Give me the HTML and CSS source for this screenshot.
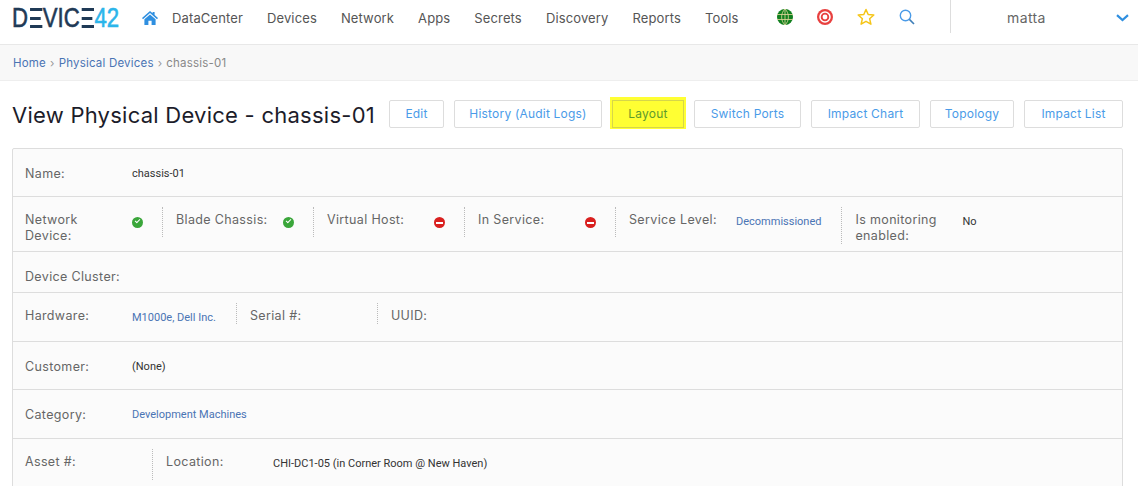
FILE: index.html
```html
<!DOCTYPE html>
<html>
<head>
    <title>View Physical Device - chassis-01</title>
    <link rel="stylesheet" href="styles.css">
</head>
<body>
    <header class="topbar">
        <a class="logo"><span class="logo-dark">D<span class="logo-e">E</span>VIC<span class="logo-e">E</span></span><span class="logo-light">42</span></a>
        <svg class="home-icon" viewBox="0 0 16 14" width="16" height="14">
            <path fill="#2f8fe0" d="M8 0 L10.6 2.3 V1 H12.6 V4.1 L16 7.1 L15 8.2 L8 2.1 L1 8.2 L0 7.1 Z"/>
            <path fill="#2f8fe0" d="M8 3.4 L13.6 8.2 V14 H9.6 V9.8 H6.4 V14 H2.4 V8.2 Z"/>
        </svg>
        <nav class="nav">
            <a>DataCenter</a>
            <a>Devices</a>
            <a>Network</a>
            <a>Apps</a>
            <a>Secrets</a>
            <a>Discovery</a>
            <a>Reports</a>
            <a>Tools</a>
        </nav>
        <div class="tools">
            <svg viewBox="0 0 16 16" width="16" height="16">
                <circle cx="8" cy="8" r="8" fill="#12801f"/>
                <path fill="none" stroke="#e8d9a0" stroke-width=".8" d="M0 5.5 H16 M0 10.5 H16 M8 0 V16 M8 0 C3.5 4 3.5 12 8 16 M8 0 C12.5 4 12.5 12 8 16"/>
            </svg>
            <svg viewBox="0 0 16 16" width="16" height="16">
                <circle cx="8" cy="8" r="8" fill="#e8403f"/>
                <circle cx="8" cy="8" r="5" fill="#e8403f" stroke="#fff" stroke-width="1.5"/>
                <circle cx="8" cy="8" r="2.4" fill="#fff"/>
            </svg>
            <svg viewBox="0 0 18 18" width="18" height="18">
                <path fill="#fff" stroke="#f5c518" stroke-width="1.5" stroke-linejoin="round" d="M9 1.5 L11.2 6.5 L16.8 7 L12.6 10.7 L13.9 16.2 L9 13.3 L4.1 16.2 L5.4 10.7 L1.2 7 L6.8 6.5 Z"/>
            </svg>
            <svg viewBox="0 0 16 16" width="16" height="16">
                <circle cx="6.5" cy="6.5" r="5.2" fill="none" stroke="#4a9be8" stroke-width="1.4"/>
                <path stroke="#3f7fb8" stroke-width="1.6" d="M10.4 10.4 L15 15"/>
            </svg>
        </div>
        <div class="user">
            <span class="user-name">matta</span>
            <svg viewBox="0 0 13 8" width="13" height="8">
                <path fill="none" stroke="#2f8fe0" stroke-width="2.2" d="M1 1.2 L6.5 6 L12 1.2"/>
            </svg>
        </div>
    </header>

    <div class="breadcrumb">
        <a>Home</a><span class="sep">›</span><a>Physical Devices</a><span class="sep">›</span><span class="current">chassis-01</span>
    </div>

    <main class="content">
        <div class="title-row">
            <h1>View Physical Device - chassis-01</h1>
            <div class="actions">
                <a class="btn">Edit</a>
                <a class="btn">History (Audit Logs)</a>
                <a class="btn btn-marked">Layout</a>
                <a class="btn">Switch Ports</a>
                <a class="btn">Impact Chart</a>
                <a class="btn">Topology</a>
                <a class="btn">Impact List</a>
            </div>
        </div>

        <div class="card">
            <div class="row row-plain row-name">
                <div class="field"><span class="label">Name:</span><span class="value">chassis-01</span></div>
            </div>
            <div class="row row-flags">
                <div class="field"><span class="label">Network Device:</span><span class="value split tight"><i class="dot ok"></i></span></div>
                <div class="field"><span class="label">Blade Chassis:</span><span class="value split tight"><i class="dot ok"></i></span></div>
                <div class="field"><span class="label">Virtual Host:</span><span class="value split tight"><i class="dot no"></i></span></div>
                <div class="field"><span class="label">In Service:</span><span class="value split tight"><i class="dot no"></i></span></div>
                <div class="field"><span class="label">Service Level:</span><span class="value split split-tall"><a>Decommissioned</a></span></div>
                <div class="field"><span class="label">Is monitoring enabled:</span><span class="value">No</span></div>
            </div>
            <div class="row row-plain row-cluster">
                <div class="field"><span class="label">Device Cluster:</span></div>
            </div>
            <div class="row row-hardware">
                <div class="field"><span class="label">Hardware:</span><span class="value split"><a>M1000e, Dell Inc.</a></span></div>
                <div class="field"><span class="label">Serial #:</span><span class="value split"></span></div>
                <div class="field"><span class="label">UUID:</span></div>
            </div>
            <div class="row row-plain row-name">
                <div class="field"><span class="label">Customer:</span><span class="value">(None)</span></div>
            </div>
            <div class="row row-plain row-category">
                <div class="field"><span class="label">Category:</span><span class="value"><a>Development Machines</a></span></div>
            </div>
            <div class="row row-asset">
                <div class="field"><span class="label">Asset #:</span><span class="value split"></span></div>
                <div class="field"><span class="label">Location:</span><span class="value">CHI-DC1-05 (in Corner Room @ New Haven)</span></div>
            </div>
        </div>
    </main>
</body>
</html>
```

FILE: styles.css
```css
html, body {
    height: 100%;
    overflow: hidden;
}

body {
    margin: 0;
    background-color: #fff;
    font-family: Inter, "Open Sans", sans-serif;
    color: #666;
}

.topbar {
    display: flex;
    align-items: flex-start;
    height: 44px;
    border-bottom: 1px solid #e8e8e8;
}

.logo {
    width: 130px;
    margin-left: 12px;
    font-family: "Liberation Sans", sans-serif;
    font-size: 27px;
    line-height: 37px;
    white-space: nowrap;
    -webkit-text-stroke: 0.6px;
    transform: scaleX(0.82);
    transform-origin: left center;
}

.logo-dark {
    color: #1f3a56;
}

.logo-light {
    color: #2cb5ea;
}

/* the E of the logo has no stem, just three bars */
.logo-e {
    display: inline-block;
    height: 37px;
    color: transparent;
    -webkit-text-stroke: 0;
    background-image: linear-gradient(#1f3a56, #1f3a56), linear-gradient(#1f3a56, #1f3a56), linear-gradient(#1f3a56, #1f3a56);
    background-repeat: no-repeat;
    background-size: 15px 3px, 13px 3px, 15px 3px;
    background-position: 2px 8px, 2px 17px, 2px 25px;
}

.home-icon {
    margin: 11px 14px 0 0;
}

.nav {
    display: flex;
    gap: 24px;
    line-height: 37px;
    font-size: 13px;
    letter-spacing: 0.13px;
    color: #555;
}

.tools {
    display: flex;
    gap: 24px;
    align-items: center;
    height: 33px;
    margin-left: 38px;
}

.user {
    display: flex;
    align-items: center;
    justify-content: space-between;
    height: 33px;
    width: 188px;
    margin-left: auto;
    border-left: 1px solid #ddd;
    box-sizing: border-box;
    padding: 2px 9px 0 56px;
    font-size: 14px;
    letter-spacing: 0.4px;
}

.breadcrumb {
    height: 35px;
    line-height: 37px;
    padding-left: 13px;
    background-color: #f8f8f8;
    border-bottom: 1px solid #eee;
    font-size: 11.5px;
    letter-spacing: 0.2px;
}

.breadcrumb a {
    color: #4a74b4;
}

.sep {
    margin: 0 4px;
    color: #999;
}

.current {
    color: #888;
}

.content {
    padding: 0 15px 0 12px;
}

.title-row {
    display: flex;
    align-items: center;
    justify-content: space-between;
    height: 67px;
}

h1 {
    margin: 0;
    font-size: 22px;
    font-weight: 400;
    letter-spacing: 0.25px;
    color: #1c1c2a;
    white-space: nowrap;
}

.actions {
    display: grid;
    grid-template-columns: 55px 148px 72px 107px 109px 84px 99px;
    gap: 10px;
    margin-top: -2px;
}

.btn {
    box-sizing: border-box;
    height: 28px;
    line-height: 26px;
    text-align: center;
    border: 1px solid #ddd;
    border-radius: 2px;
    font-size: 12px;
    letter-spacing: 0.2px;
    color: #4a9be8;
    white-space: nowrap;
}

.btn-marked {
    background-color: #ffff33;
    border-color: #d6d64a;
    border-radius: 0;
    box-shadow: 0 -1px 0 2px #ffff33;
    color: #5f9a2c;
}

.card {
    height: 400px;
    background-color: #fbfbfb;
    border: 1px solid #ddd;
    border-radius: 2px;
}

.row {
    display: flex;
    box-sizing: border-box;
    padding-top: 10px;
    border-bottom: 1px solid #ddd;
}

.row-plain {
    padding-top: 12px;
}

.row-name {
    height: 48px;
}

.row-category {
    height: 49px;
}

.row-cluster {
    height: 41px;
}

.row-cluster .label {
    width: auto;
}

.row-flags {
    height: 55px;
}

.row-hardware {
    height: 49px;
}

.row-asset {
    border-bottom: none;
}

.field {
    display: flex;
    padding-left: 13px;
}

.field:first-child {
    padding-left: 12px;
}

.label {
    box-sizing: border-box;
    width: 107px;
    padding: 5px 12px 0 0;
    font-size: 12.5px;
    letter-spacing: 0.35px;
    line-height: 16px;
    color: #666;
}

.value {
    padding-top: 7px;
    font-family: Roboto, sans-serif;
    font-size: 11px;
    line-height: 16px;
    color: #333;
}

.row-plain .value {
    padding-top: 5px;
}

.value a {
    color: #4a74b4;
}

.split {
    padding-right: 20px;
    border-right: 1px dotted #bbb;
    height: 21px;
}

.tight {
    padding-right: 19px;
}

.row-flags .split {
    height: 23px;
}

.row-flags .split-tall {
    height: 30px;
}

.row-hardware .split {
    height: 14px;
}

.row-asset .split {
    height: 24px;
}

.dot {
    display: block;
    position: relative;
    width: 11px;
    height: 11px;
    margin-top: 3px;
    border-radius: 50%;
}

.dot.ok {
    background-color: #3aa63a;
}

.dot.ok::after {
    content: "";
    position: absolute;
    left: 3px;
    top: 2px;
    width: 4px;
    height: 2px;
    border-left: 1.5px solid #fff;
    border-bottom: 1.5px solid #fff;
    transform: rotate(-45deg);
}

.dot.no {
    background-color: #d9201f;
}

.dot.no::after {
    content: "";
    position: absolute;
    left: 2px;
    top: 4.5px;
    width: 7px;
    height: 2px;
    background-color: #fff;
}
```
